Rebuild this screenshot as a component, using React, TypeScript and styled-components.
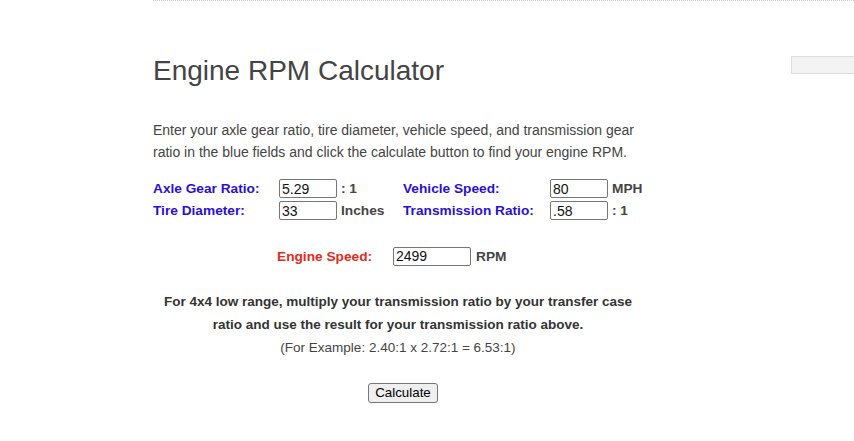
import styled, { createGlobalStyle } from 'styled-components'

const GlobalStyle = createGlobalStyle`
  html, body {
    margin: 0;
    padding: 0;
    background: #fff;
  }
  body {
    font-family: 'Liberation Sans', Arial, sans-serif;
    color: #444;
  }
`

const fields = [
  {
    label: 'Axle Gear Ratio:',
    value: '5.29',
    unit: ': 1',
    label2: 'Vehicle Speed:',
    value2: '80',
    unit2: 'MPH',
  },
  {
    label: 'Tire Diameter:',
    value: '33',
    unit: 'Inches',
    label2: 'Transmission Ratio:',
    value2: '.58',
    unit2: ': 1',
  },
]

const App = () => {
  return (
    <>
      <GlobalStyle />
      <StyledPage>
        <StyledMain>
          <StyledTitle>Engine RPM Calculator</StyledTitle>
          <StyledIntro>
            Enter your axle gear ratio, tire diameter, vehicle speed, and
            transmission gear ratio in the blue fields and click the calculate
            button to find your engine RPM.
          </StyledIntro>
          <StyledFieldGrid>
            {fields.map((row) => (
              <>
                <StyledLabel key={row.label}>{row.label}</StyledLabel>
                <StyledInput defaultValue={row.value} />
                <StyledUnit>{row.unit}</StyledUnit>
                <StyledLabel>{row.label2}</StyledLabel>
                <StyledInput defaultValue={row.value2} />
                <StyledUnit>{row.unit2}</StyledUnit>
              </>
            ))}
          </StyledFieldGrid>
          <StyledResultRow>
            <StyledResultLabel>Engine Speed:</StyledResultLabel>
            <StyledInput $wide defaultValue="2499" />
            <StyledUnit>RPM</StyledUnit>
          </StyledResultRow>
          <StyledNote>
            <StyledNoteStrong>
              For 4x4 low range, multiply your transmission ratio by your
              transfer case ratio and use the result for your transmission ratio
              above.
            </StyledNoteStrong>
            <StyledExample>(For Example: 2.40:1 x 2.72:1 = 6.53:1)</StyledExample>
          </StyledNote>
          <StyledButtonRow>
            <StyledButton type="button">Calculate</StyledButton>
          </StyledButtonRow>
        </StyledMain>
        <StyledSidebar>
          <StyledSearchBox />
        </StyledSidebar>
      </StyledPage>
    </>
  )
}

export default App

const StyledPage = styled.div`
  margin-left: 153px;
  border-top: 1px dotted #cfcfcf;
  display: flex;
  gap: 138px;
  height: 440px;
  overflow: hidden;
`

const StyledMain = styled.main`
  width: 500px;
  flex-shrink: 0;
  display: flex;
  flex-direction: column;
`

const StyledTitle = styled.h1`
  margin: 53px 0 0;
  font-size: 28px;
  font-weight: 400;
  line-height: 1.2;
  color: #444;
`

const StyledIntro = styled.p`
  margin: 31px 0 0;
  font-size: 14px;
  line-height: 22px;
  color: #444;
  width: 490px;
`

const StyledFieldGrid = styled.div`
  margin-top: 15px;
  display: grid;
  grid-template-columns: 126px 62px 62px 147px 62px auto;
  grid-auto-rows: 22px;
  align-items: center;
`

const StyledLabel = styled.span`
  font-size: 13.7px;
  font-weight: 700;
  color: #2b0fd2;
`

const StyledUnit = styled.span`
  font-size: 13.7px;
  font-weight: 700;
  color: #444;
`

const StyledInput = styled.input<{ $wide?: boolean }>`
  box-sizing: border-box;
  width: ${(p) => (p.$wide ? '78px' : '58px')};
  height: 19px;
  padding: 0 2px;
  border: 1px solid #767676;
  border-radius: 2px;
  font-family: 'Liberation Sans', Arial, sans-serif;
  font-size: 14px;
  color: #111;
  background: #fff;
`

const StyledResultRow = styled.div`
  margin-top: 25px;
  margin-left: 124px;
  display: flex;
  align-items: center;
  gap: 5px;
`

const StyledResultLabel = styled.span`
  width: 111px;
  font-size: 13.7px;
  font-weight: 700;
  color: #e02b1d;
`

const StyledNote = styled.div`
  margin-top: 24px;
  width: 490px;
  text-align: center;
  font-size: 13.5px;
  line-height: 23px;
`

const StyledNoteStrong = styled.div`
  font-weight: 700;
  color: #333;
`

const StyledExample = styled.div`
  color: #444;
`

const StyledButtonRow = styled.div`
  margin-top: 24px;
  display: flex;
  justify-content: center;
`

const StyledButton = styled.button`
  font-family: 'Liberation Sans', Arial, sans-serif;
  font-size: 13.33px;
  color: #000;
  padding: 1px 6px;
  height: 20px;
  background: #efefef;
  border: 1px solid #767676;
  border-radius: 3px;
`

const StyledSidebar = styled.aside`
  flex: 1;
  padding-top: 55px;
`

const StyledSearchBox = styled.div`
  height: 16px;
  background: #f3f3f3;
  border: 1px solid #dedede;
  border-right: none;
`
